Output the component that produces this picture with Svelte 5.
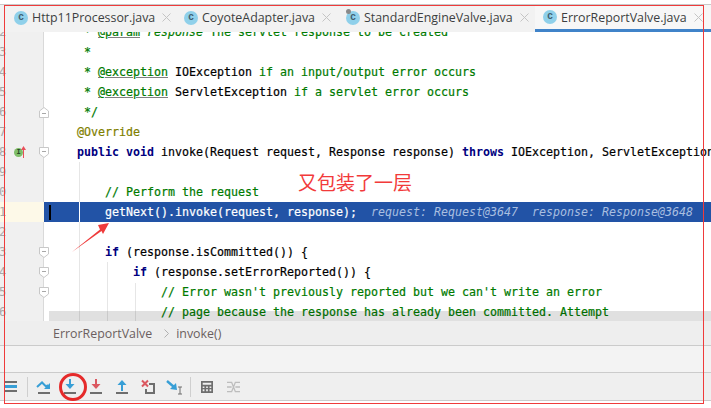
<script>
  const tabs = [
    { name: "Http11Processor.java", cls: "t1" },
    { name: "CoyoteAdapter.java", cls: "t2" },
    { name: "StandardEngineValve.java", cls: "t3", pinned: true },
    { name: "ErrorReportValve.java", cls: "t4 active" },
  ];

  // c = comment, t = javadoc tag, r = javadoc ref, k = keyword, a = annotation, h = inline debug hint
  const rows = [
    { n: "2", s: [["c", "     * "], ["t", "@param"], ["c", " "], ["ci", "response"], ["c", " The servlet response to be created"]] },
    { n: "3", s: [["c", "     *"]] },
    { n: "4", s: [["c", "     * "], ["t", "@exception"], ["c", " "], ["r", "IOException"], ["c", " if an input/output error occurs"]] },
    { n: "5", s: [["c", "     * "], ["t", "@exception"], ["c", " "], ["r", "ServletException"], ["c", " if a servlet error occurs"]] },
    { n: "6", fold: "end", s: [["c", "     */"]] },
    { n: "7", s: [["a", "    @Override"]] },
    { n: "8", fold: "start", mark: true, s: [["k", "    public void"], ["", " invoke(Request request, Response response) "], ["k", "throws"], ["", " IOException, ServletException {"]] },
    { n: "9", s: [] },
    { n: "0", s: [["c", "        // Perform the request"]] },
    { n: "1", current: true, s: [["", "        getNext().invoke(request, response);  "], ["h", "request: Request@3647  response: Response@3648"]] },
    { n: "2", s: [] },
    { n: "3", fold: "start", s: [["k", "        if"], ["", " (response.isCommitted()) {"]] },
    { n: "4", fold: "start", s: [["k", "            if"], ["", " (response.setErrorReported()) {"]] },
    { n: "5", fold: "start", s: [["c", "                // Error wasn't previously reported but we can't write an error"]] },
    { n: "6", s: [["c", "                // page because the response has already been committed. Attempt"]] },
  ];
</script>

<div class="ide">
  <div class="tabs">
    {#each tabs as tab}
      <div class="tab {tab.cls}">
        <span class="file-icon">
          c
          {#if tab.pinned}<i class="pin"></i>{/if}
        </span>
        <span class="tab-name">{tab.name}</span>
        <svg class="tab-close" width="9" height="9" viewBox="0 0 9 9" fill="none" stroke="#c4c4c4" stroke-width="1">
          <line x1="0.5" y1="0.5" x2="8.5" y2="8.5" /><line x1="8.5" y1="0.5" x2="0.5" y2="8.5" />
        </svg>
      </div>
    {/each}
  </div>

  <div class="editor">
    <div class="lines">
      {#each rows as row}
        <div class="row" class:current={row.current}>
          <div class="gutter">
            <span class="num">{row.n}</span>
            {#if row.mark}
              <span class="impl">I</span>
              <svg class="up" width="5" height="12" viewBox="0 0 5 12"><path d="M2.5 0 L5 4 H3 V12 H2 V4 H0 Z" fill="#e8505b" /></svg>
            {/if}
            {#if row.fold}
              <svg class="fold" class:end={row.fold === "end"} width="10" height="11" viewBox="0 0 10 11" fill="#fff" stroke="#c8c8c8">
                <path d="M0.5 0.5 H9.5 V7 L5 10.5 L0.5 7 Z" /><line x1="3" y1="4.5" x2="7" y2="4.5" stroke="#a8a8a8" />
              </svg>
            {/if}
          </div>
          <div class="code">{#if row.current}<i class="caret"></i>{/if}{#each row.s as [kind, text]}<span class={kind}>{text}</span>{/each}</div>
        </div>
      {/each}
    </div>
    <i class="guide g1"></i>
    <i class="guide g2"></i>
    <i class="guide g3"></i>
    <div class="hscroll"></div>
  </div>

  <div class="crumbs">
    <span>ErrorReportValve</span>
    <svg width="5" height="9" viewBox="0 0 5 9" fill="none" stroke="#b0b0b0"><path d="M0.5 0.5 L4.5 4.5 L0.5 8.5" /></svg>
    <span>invoke()</span>
  </div>

  <div class="spacer"></div>

  <div class="toolbar">
    <svg class="menu" width="12" height="12" viewBox="0 0 12 12">
      <rect y="0" width="12" height="2" fill="#6e6e6e" /><rect y="4" width="12" height="3" fill="#389fd6" /><rect y="9" width="12" height="2" fill="#6e6e6e" />
    </svg>
    <i class="sep first"></i>
    <svg width="16" height="16" viewBox="0 0 16 16">
      <path d="M1 8 L6 3.5 L10 7.5 L12 6" fill="none" stroke="#389fd6" stroke-width="2" />
      <path d="M14 4 V10 H8 Z" fill="#389fd6" />
      <rect x="2" y="13" width="12" height="2" fill="#6e6e6e" />
    </svg>
    <svg width="16" height="16" viewBox="0 0 16 16">
      <rect x="7" y="0" width="2" height="6" fill="#389fd6" /><path d="M3.5 5 H12.5 L8 10 Z" fill="#389fd6" />
      <rect x="2" y="13" width="12" height="2" fill="#6e6e6e" />
    </svg>
    <svg width="16" height="16" viewBox="0 0 16 16">
      <rect x="7" y="0" width="2" height="6" fill="#db5860" /><path d="M3.5 5 H12.5 L8 10 Z" fill="#db5860" />
      <rect x="2" y="13" width="12" height="2" fill="#6e6e6e" />
    </svg>
    <svg width="16" height="16" viewBox="0 0 16 16">
      <rect x="7" y="5" width="2" height="7" fill="#389fd6" /><path d="M3.5 6 H12.5 L8 1 Z" fill="#389fd6" />
      <rect x="2" y="13" width="12" height="2" fill="#6e6e6e" />
    </svg>
    <svg width="16" height="16" viewBox="0 0 16 16" fill="none">
      <path d="M2 1.5 L8 7.5 M8 1.5 L2 7.5" stroke="#db5860" stroke-width="2" />
      <path d="M9 5 H14 V14 H6 V10" stroke="#6e6e6e" stroke-width="2" />
    </svg>
    <svg class="run" width="18" height="16" viewBox="0 0 18 16" fill="none">
      <path d="M1 2 L8 8" stroke="#389fd6" stroke-width="2.4" />
      <path d="M11 11 L10 4 L4 10 Z" fill="#389fd6" />
      <path d="M12 8 H16 M14 8 V15 M12 15 H16" stroke="#6e6e6e" stroke-width="1" />
    </svg>
    <i class="sep"></i>
    <svg class="calc" width="12" height="12" viewBox="0 0 14 13" preserveAspectRatio="none">
      <path fill-rule="evenodd" fill="#6e6e6e" d="M0 0 H14 V13 H0 Z M2 2 V4 H12 V2 Z M2 6 V7.5 H4 V6 Z M6 6 V7.5 H8 V6 Z M10 6 V7.5 H12 V6 Z M2 9 V11 H4 V9 Z M6 9 V11 H8 V9 Z M10 9 V11 H12 V9 Z" />
    </svg>
    <svg class="trace" width="13" height="12" viewBox="0 0 14 12" fill="none" stroke="#bdbdbd" stroke-width="1.4">
      <path d="M0 1 H5 L7 6 L5 11 H0 M0 6 H5 M14 1 H9 L7 6 L9 11 H14 M9 6 H14" />
    </svg>
  </div>

  <!-- screenshot annotations drawn on top -->
  <div class="red-frame"></div>
  <div class="note">又包装了一层</div>
  <svg class="marks" width="711" height="408" viewBox="0 0 711 408" fill="none">
    <path d="M72 252 L100 229.5 L98 225 L109 223 L103 234 L101.5 231 Z" fill="#ef3b3b" />
    <circle cx="73" cy="387" r="12.5" stroke="#e52a2a" stroke-width="3" />
  </svg>
</div>

<style>
  :global(body) {
    margin: 0;
    background: #fff;
  }

  .ide {
    position: relative;
    width: 711px;
    height: 408px;
    padding-top: 4px;
    box-sizing: border-box;
    display: flex;
    flex-direction: column;
    overflow: hidden;
    font-family: "Open Sans", "Noto Sans", sans-serif;
  }

  .tabs {
    display: flex;
    flex: none;
    height: 28px;
    padding-left: 5px;
    background: #f2f2f2;
    border-top: 1px solid #c9c9c9;
    box-sizing: border-box;
  }

  .tab {
    display: flex;
    align-items: center;
    box-sizing: border-box;
    padding-left: 9px;
    padding-bottom: 2px;
    font-size: 12.4px;
    color: #3c3f41;
    white-space: nowrap;
  }

  .t1 { width: 170px; }
  .t2 { width: 162px; }
  .t3 { width: 198px; }
  .t4 { width: 176px; }

  .active {
    background: #f7f7f7;
    border-bottom: 3px solid #4083c9;
    padding-bottom: 0;
    padding-left: 8px;
  }

  .file-icon {
    position: relative;
    flex: none;
    width: 14px;
    height: 14px;
    border-radius: 50%;
    background: #8fd0ea;
    color: #3f5f70;
    font: 700 10px/12px "Liberation Sans", sans-serif;
    text-align: center;
  }

  .pin {
    position: absolute;
    left: 0;
    top: -2px;
    width: 5px;
    height: 5px;
    border-radius: 50%;
    background: #8a8a8a;
  }

  .tab-name {
    margin-left: 4px;
  }

  .tab-close {
    margin-left: 7px;
  }

  .editor {
    position: relative;
    flex: none;
    height: 289px;
    background: #fff;
    overflow: hidden;
  }

  .lines {
    margin-top: -10px;
    display: flex;
    flex-direction: column;
  }

  .row {
    display: flex;
    height: 20px;
  }

  .gutter {
    position: relative;
    flex: none;
    width: 44px;
    box-sizing: border-box;
    background: #f0f0f0;
    border-right: 1px solid #d9d9d9;
  }

  .current .gutter {
    background: #fdf9e8;
    border-right-color: #fdf9e8;
  }

  .num {
    display: block;
    margin-left: -1px;
    font: 12px/20px "DejaVu Sans Mono", monospace;
    color: #a8a8a8;
  }

  .impl {
    position: absolute;
    left: 14px;
    top: 6px;
    width: 9px;
    height: 9px;
    border-radius: 50%;
    background: #7fbf6a;
    color: #274b2a;
    font: 700 7px/9px "DejaVu Sans Mono", monospace;
    text-align: center;
  }

  .up {
    position: absolute;
    left: 21px;
    top: 4px;
  }

  .fold {
    position: absolute;
    left: 39px;
    top: 5px;
    z-index: 1;
  }

  .fold.end {
    transform: rotate(180deg);
  }

  .code {
    position: relative;
    flex: 1;
    min-width: 0;
    padding-left: 5px;
    font: 11.63px/20px "DejaVu Sans Mono", monospace;
    -webkit-text-stroke: 0.2px currentColor;
    color: #000;
    white-space: pre;
    overflow: hidden;
  }

  .current .code {
    background: #2253a6;
    color: #fff;
  }

  .caret {
    position: absolute;
    left: 5px;
    top: 3px;
    width: 2px;
    height: 15px;
    background: #000;
  }

  .c { color: #007a00; }
  .ci { color: #007a00; font-style: italic; }
  .t { color: #007a00; text-decoration: underline; text-decoration-color: #808080; }
  .r { color: #000; }
  .k { color: #000080; font-weight: 700; -webkit-text-stroke: 0; }
  .a { color: #808000; }
  .h { color: #a9bfe0; font-style: italic; -webkit-text-stroke: 0; }

  .guide {
    position: absolute;
    width: 1px;
    bottom: 0;
    background: #e6e6e6;
  }

  .g1 {
    left: 79px;
    top: 130px;
    background: linear-gradient(#e6e6e6 40px, #fff 40px, #fff 60px, #e6e6e6 60px);
  }
  .g2 { left: 107px; top: 230px; }
  .g3 { left: 135px; top: 251px; }

  .hscroll {
    position: absolute;
    left: 49px;
    right: 0;
    bottom: 0;
    height: 10px;
    background: rgba(0, 0, 0, 0.12);
  }

  .crumbs {
    flex: none;
    height: 25px;
    display: flex;
    align-items: center;
    gap: 12px;
    padding-left: 53px;
    box-sizing: border-box;
    background: #eeeeee;
    border-bottom: 1px solid #cbcbcb;
    font-size: 12.4px;
    color: #6b5f5f;
  }

  .crumbs svg {
    margin-right: -5px;
  }

  .spacer {
    flex: none;
    height: 27px;
    box-sizing: border-box;
    background: #f3f3f3;
    border-bottom: 1px solid #cbcbcb;
  }

  .toolbar {
    flex: none;
    height: 28px;
    box-sizing: border-box;
    display: flex;
    align-items: center;
    gap: 10px;
    background: #efefef;
    border-bottom: 1px solid #cbcbcb;
  }

  .menu { margin-left: 5px; }
  .sep { width: 1px; height: 20px; background: #cfcfcf; flex: none; }
  .sep.first { margin-right: -2px; }
  .run { margin-right: -4px; }
  .calc { margin-right: 4px; }

  .red-frame {
    position: absolute;
    left: 4px;
    top: 5px;
    width: 698px;
    height: 397px;
    border: 1px solid #ef3b3b;
    pointer-events: none;
  }

  .note {
    position: absolute;
    left: 298px;
    top: 168px;
    font: 19px/28px "Noto Sans CJK SC", sans-serif;
    color: #f23a3a;
  }

  .marks {
    position: absolute;
    left: 0;
    top: 0;
  }
</style>
